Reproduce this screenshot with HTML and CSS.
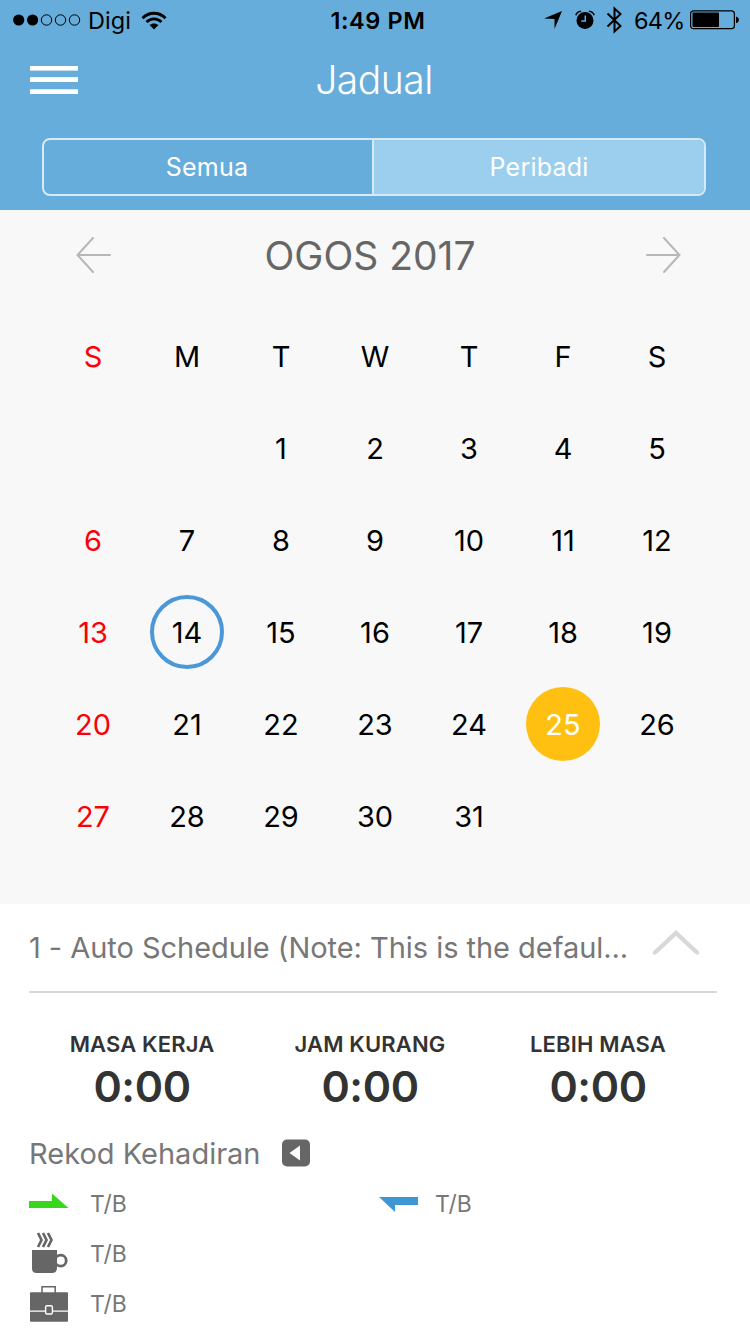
FILE: index.html
```html
<!DOCTYPE html>
<html lang="ms">
<head>
<meta charset="utf-8">
<title>Jadual</title>
<link rel="stylesheet" href="styles.css">
</head>
<body>
<header class="header">
  <div class="status">
    <div class="status-left">
      <svg width="68" height="12" viewBox="0 0 68 12"><circle cx="5.7" cy="6" r="5.6"/><circle cx="19.6" cy="6" r="5.6"/><g fill="none" stroke="#000" stroke-width="1"><circle cx="33.5" cy="6" r="5.2"/><circle cx="47.5" cy="6" r="5.2"/><circle cx="61.5" cy="6" r="5.2"/></g></svg>
      <span class="carrier">Digi</span>
      <svg class="wifi" width="26" height="19" viewBox="0 0 26 19"><g fill="none" stroke="#000" stroke-width="2.9"><path d="M1.5 7.2C8 .6 18 .6 24.5 7.2"/><path d="M5.5 11C10 6.8 16 6.8 20.500 11"/></g><path d="M8.500 14C11 11.900 15 11.900 17.500 14L13 18.500Z"/></svg>
    </div>
    <span class="clock">1:49 PM</span>
    <div class="status-right">
      <svg width="20" height="20" viewBox="0 0 20 20"><path d="M19 1 11.500 19V9L1 8.500Z"/></svg>
      <svg class="alarm" width="20" height="20" viewBox="0 0 20 20"><circle cx="10" cy="10.500" r="8.500"/><path d="M.8 5.200Q2 1.500 6 1.200M19.200 5.200Q18 1.500 14 1.200" fill="none" stroke="#000" stroke-width="1.500"/><path d="M10.300 5.500V11H6.300" fill="none" stroke="#67addb" stroke-width="1.500"/></svg>
      <svg class="bluetooth" width="17" height="28" viewBox="0 0 17 28"><path d="M1.500 7.500 14.500 20 8.500 25.500V2.500L14.500 8 1.500 20.500" fill="none" stroke="#000" stroke-width="2"/></svg>
      <span class="percent">64%</span>
      <svg class="battery" width="50" height="20" viewBox="0 0 50 20"><rect x=".6" y=".9" width="43.800" height="17.800" rx="3" fill="none" stroke="#000" stroke-width="1.200"/><rect x="2.500" y="2.500" width="26.500" height="14.500" rx="1"/><path d="M46 6.500Q49 7.500 49 9.800T46 13.200Z"/></svg>
    </div>
  </div>
  <div class="nav">
    <svg class="menu" width="48" height="30" viewBox="0 0 48 30" fill="#fff"><rect y="1" width="48" height="4.600"/><rect y="12.100" width="48" height="4.900"/><rect y="24.300" width="48" height="4.700"/></svg>
    <h1 class="title">Jadual</h1>
  </div>
  <div class="tabs"><div class="tab">Semua</div><div class="tab tab-light">Peribadi</div></div>
</header>

<main>
  <section class="calendar">
    <div class="month">
      <svg width="36" height="38" viewBox="0 0 36 38"><path d="M34 19H1.500M17 2 1.500 19 17 36" class="arrow"/></svg>
      <h2 class="month-name">OGOS 2017</h2>
      <svg width="36" height="38" viewBox="0 0 36 38"><path d="M2 19H34.500M19 2 34.500 19 19 36" class="arrow"/></svg>
    </div>
    <div class="days">
      <span class="red">S</span><span>M</span><span>T</span><span>W</span><span>T</span><span>F</span><span>S</span>
      <span></span><span></span><span>1</span><span>2</span><span>3</span><span>4</span><span>5</span>
      <span class="red">6</span><span>7</span><span>8</span><span>9</span><span>10</span><span>11</span><span>12</span>
      <span class="red">13</span><span class="selected">14</span><span>15</span><span>16</span><span>17</span><span>18</span><span>19</span>
      <span class="red">20</span><span>21</span><span>22</span><span>23</span><span>24</span><span class="today">25</span><span>26</span>
      <span class="red">27</span><span>28</span><span>29</span><span>30</span><span>31</span><span></span><span></span>
    </div>
  </section>

  <section class="details">
    <div class="schedule">
      <span class="schedule-name">1 - Auto Schedule (Note: This is the defaul...</span>
      <svg class="chevron" width="48" height="26" viewBox="0 0 48 26"><path d="M3 22.500 24 3 45 22.500" fill="none" stroke="#d8d8d8" stroke-width="4.400" stroke-linecap="round"/></svg>
    </div>
    <div class="totals">
      <div class="total"><div class="label">MASA KERJA</div><div class="value">0:00</div></div>
      <div class="total"><div class="label">JAM KURANG</div><div class="value">0:00</div></div>
      <div class="total"><div class="label">LEBIH MASA</div><div class="value">0:00</div></div>
    </div>
    <div class="record">
      <span class="record-name">Rekod Kehadiran</span>
      <svg width="28" height="28" viewBox="0 0 28 28"><rect y=".5" width="28" height="27" rx="5" fill="#666"/><path d="M18 6.500V21.500L7.500 14Z" fill="#fff"/></svg>
    </div>
    <div class="entries">
      <div class="entry"><svg width="40" height="40" viewBox="0 0 40 40"><path d="M0 18H23V10.500L39.500 25H0Z" fill="#37d81b"/></svg><span class="time">T/B</span></div>
      <div class="entry entry-out"><svg width="40" height="40" viewBox="0 0 40 40"><path d="M0 14H39V22H16V29Z" fill="#3f96d4"/></svg><span class="time">T/B</span></div>
      <div class="entry"><svg width="40" height="42" viewBox="0 0 40 42"><g fill="none" stroke="#666" stroke-width="2.700"><path d="M9 1 12.500 8 9 15M14 1 17.500 8 14 15M19 1 22.500 8 19 15"/><circle cx="31.700" cy="28.700" r="5.500" stroke-width="2.800"/></g><path d="M3 18H28V36Q28 41 23 41H7.500Q3 41 3 36.500Z" fill="#666"/></svg><span class="time">T/B</span></div>
      <div class="entry entry-case"><svg width="40" height="40" viewBox="0 0 40 40"><path d="M13 10V3.700H26.200V10" fill="none" stroke="#666" stroke-width="1.500"/><rect x="1" y="9.300" width="38" height="29.500" rx="1" fill="#666"/><path d="M1 28.200H39" stroke="#fff" stroke-width="1.300"/><rect x="16.600" y="22.700" width="6.800" height="8.300" rx="1.500" fill="#666" stroke="#fff" stroke-width="1.400"/></svg><span class="time">T/B</span></div>
    </div>
  </section>
</main>
</body>
</html>
```

FILE: styles.css
```css
* { box-sizing: border-box; }
body { margin: 0; width: 750px; height: 1334px; overflow: hidden; background: #fff; color: #000; font-family: Inter, "Liberation Sans", sans-serif; }
svg { display: block; flex: none; }
h1, h2 { margin: 0; font-weight: 400; }

.header { height: 210px; background: #67addb; }
.status { display: grid; grid-template-columns: 250px 250px 250px; height: 40px; align-items: center; font-size: 23.5px; white-space: nowrap; }
.status-left { display: flex; align-items: center; padding-left: 13px; }
.carrier { width: 42px; margin-left: 7px; letter-spacing: 0.1px; }
.wifi { margin-left: 11px; }
.clock { text-align: center; font-weight: 600; letter-spacing: 0.6px; padding-left: 6px; }
.status-right { display: flex; align-items: center; padding-left: 43px; }
.alarm { margin-left: 12px; }
.bluetooth { margin-left: 11px; }
.percent { width: 51px; margin-left: 11px; letter-spacing: -0.7px; }
.battery { margin-left: 5px; }

.nav { display: grid; grid-template-columns: 48px 1fr 48px; height: 80px; align-items: center; padding: 0 32px 0 30px; }
.title { text-align: center; color: #fff; font-size: 39px; font-weight: 350; letter-spacing: -0.5px; line-height: 80px; }
.tabs { display: grid; grid-template-columns: 328px 1fr; width: 664px; height: 58px; margin: 18px 0 0 42px; border: 2px solid #d4eaf7; border-radius: 8px; overflow: hidden; color: #fff; font-size: 25px; text-align: center; line-height: 54px; letter-spacing: 0.2px; }
.tab { padding-right: 2px; }
.tab-light { padding-right: 0; background: #9bcfed; border-left: 2px solid #d4eaf7; }

.calendar { height: 694px; background: #f8f8f8; padding: 0 46px; }
.month { display: grid; grid-template-columns: 36px 1fr 36px; align-items: center; height: 90px; padding: 0 23px 0 30px; }
.arrow { fill: none; stroke: #b7b7b7; stroke-width: 2; stroke-linecap: round; }
.month-name { padding-right: 17px; text-align: center; color: #666; font-size: 39px; letter-spacing: 0; }
.days { display: grid; grid-template-columns: repeat(7, 94px); grid-auto-rows: 92px; margin-top: 10px; place-items: center; font-size: 29px; }
.red { color: #fb0007; }
.selected, .today { width: 74px; height: 74px; border-radius: 50%; display: flex; align-items: center; justify-content: center; }
.selected { border: 4px solid #4a98d8; }
.today { background: #ffc011; color: #fff; }

.details { padding: 0 33px 0 29px; }
.schedule { display: flex; align-items: center; height: 89px; border-bottom: 2px solid #d8d8d8; color: #777; font-size: 29px; }
.schedule-name { width: 601px; white-space: nowrap; letter-spacing: -0.04px; }
.chevron { margin: -9px 0 0 22px; }
.totals { display: grid; grid-template-columns: repeat(3, 228px); height: 136px; padding-top: 37px; text-align: center; color: #333; }
.total { padding-right: 2px; }
.label { font-size: 22px; line-height: 28px; font-weight: 600; letter-spacing: 0.15px; white-space: nowrap; }
.value { font-size: 43px; line-height: 56px; font-weight: 600; letter-spacing: -0.4px; }
.record { display: flex; align-items: center; height: 48px; color: #777; font-size: 29px; }
.record-name { width: 253px; white-space: nowrap; }
.entries { display: grid; grid-template-columns: 350px 1fr; grid-auto-rows: 50px; padding-top: 1px; }
.entry { display: flex; align-items: center; gap: 21px; color: #777; font-size: 23px; }
.time { padding-top: 2px; letter-spacing: -0.1px; }
.entry-out { gap: 16px; }
.entry-case { grid-column: 1; }
```
